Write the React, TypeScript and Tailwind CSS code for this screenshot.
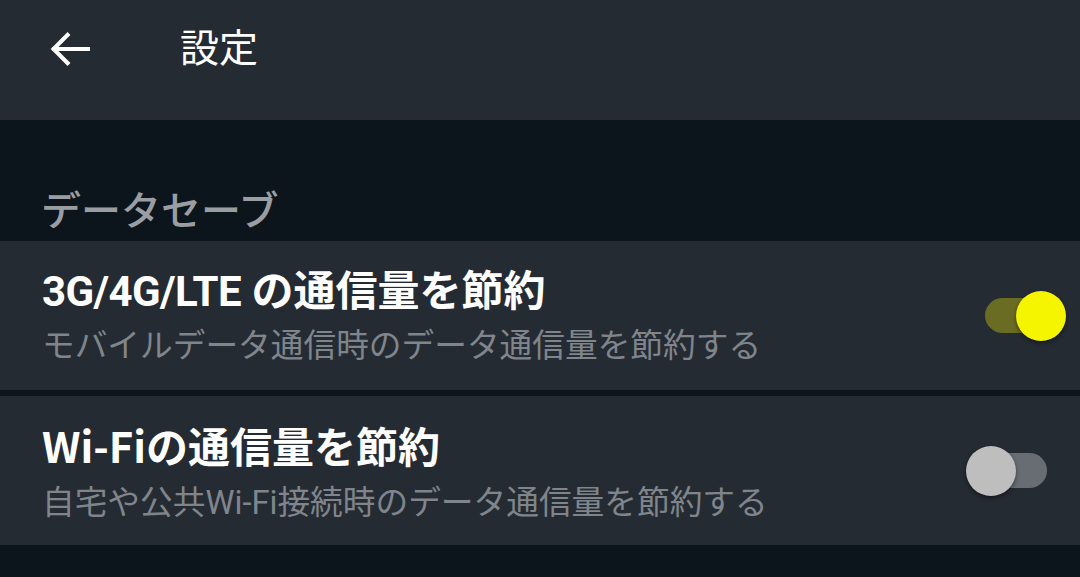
import { useState } from 'react'

const font = { fontFamily: 'Roboto, "Noto Sans CJK JP", sans-serif' }

function Toggle({ on, onClick }: { on: boolean; onClick: () => void }) {
  return (
    <button onClick={onClick} className="relative w-[62px] h-[50px] flex items-center shrink-0">
      <div className={`w-full h-[35px] rounded-full ${on ? 'bg-[#6b6c24]' : 'bg-[#686d74]'}`} />
      <div
        className={`absolute top-0 w-[50px] h-[50px] rounded-full shadow-[0_2px_4px_rgba(0,0,0,0.45)] ${
          on ? 'left-[31px] bg-[#f5f500]' : 'left-[-19px] bg-[#bebebe]'
        }`}
      />
    </button>
  )
}

function Row({
  title,
  sub,
  on,
  onToggle,
}: {
  title: React.ReactNode
  sub: string
  on: boolean
  onToggle: () => void
}) {
  return (
    <div className="h-[149px] bg-[#252b33] flex items-center pl-[42px] pr-[33px]">
      <div className="flex-1 min-w-0 pt-[2px]">
        <div className="text-[42px] leading-[52px] font-bold text-white">{title}</div>
        <div className="text-[32.7px] leading-[44px] text-[#80858b] mt-[6px]">{sub}</div>
      </div>
      <Toggle on={on} onClick={onToggle} />
    </div>
  )
}

export default function App() {
  const [mobile, setMobile] = useState(true)
  const [wifi, setWifi] = useState(false)

  return (
    <div className="w-[1080px] h-[577px] bg-[#0c151b] overflow-hidden" style={font}>
      {/* Header */}
      <header className="h-[120px] bg-[#252b33]">
        <div className="h-[98px] flex items-center">
          <button className="ml-[48px] w-[44px] h-[44px] flex items-center justify-center">
            <svg width="44" height="44" viewBox="0 0 44 44" fill="none" stroke="white" strokeWidth="4" strokeLinecap="square">
              <path d="M6 22h34" />
              <path d="M21 6.5 5.5 22 21 37.5" strokeLinecap="butt" />
            </svg>
          </button>
          <h1 className="ml-[88px] text-[39px] text-white font-normal leading-none">設定</h1>
        </div>
      </header>

      {/* Section */}
      <div className="h-[121px] flex items-end pl-[41px] pb-[5px]">
        <span className="text-[40px] leading-[48px] text-[#9a9da2] font-medium">データセーブ</span>
      </div>

      <Row
        title={
          <>
            <span className="tracking-[-0.6px]">3G/4G/LTE</span> の通信量を節約
          </>
        }
        sub="モバイルデータ通信時のデータ通信量を節約する"
        on={mobile}
        onToggle={() => setMobile(!mobile)}
      />
      <div className="h-[6px]" />
      <Row
        title={<span style={{ fontFamily: '"Noto Sans CJK JP", sans-serif' }}>Wi-Fiの通信量を節約</span>}
        sub="自宅や公共Wi-Fi接続時のデータ通信量を節約する"
        on={wifi}
        onToggle={() => setWifi(!wifi)}
      />
    </div>
  )
}
